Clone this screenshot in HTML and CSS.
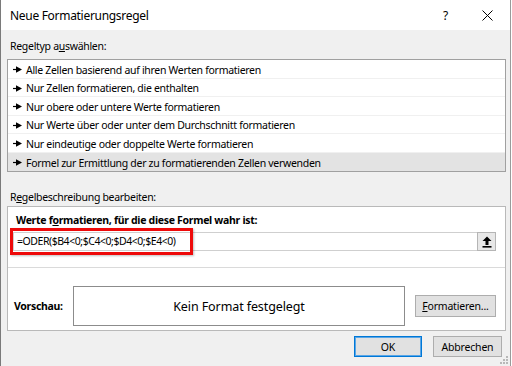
FILE: index.html
```html
<!DOCTYPE html>
<html lang="de">
<head>
<meta charset="utf-8">
<title>Neue Formatierungsregel</title>
<link rel="stylesheet" href="styles.css">
</head>
<body>
<div class="window">
  <div class="titlebar">
    <span class="title">Neue Formatierungsregel</span>
    <span class="cap help">?</span>
    <span class="cap close"><svg width="11" height="11" viewBox="0 0 11 11"><path d="M0.5 0.5 L10.5 10.5 M10.5 0.5 L0.5 10.5" stroke="#000" stroke-width="1" fill="none"/></svg></span>
  </div>
  <div class="content">
    <div class="label l1">Regeltyp a<u>u</u>swählen:</div>
    <ul class="list">
      <li><svg class="arr" width="9" height="7" viewBox="0 0 9 7"><path d="M0 3.5 H4" stroke="#000" stroke-width="1.2"/><polygon points="3,0.3 9,3.5 3,6.7" fill="#000"/></svg>Alle Zellen basierend auf ihren Werten formatieren</li>
      <li><svg class="arr" width="9" height="7" viewBox="0 0 9 7"><path d="M0 3.5 H4" stroke="#000" stroke-width="1.2"/><polygon points="3,0.3 9,3.5 3,6.7" fill="#000"/></svg>Nur Zellen formatieren, die enthalten</li>
      <li><svg class="arr" width="9" height="7" viewBox="0 0 9 7"><path d="M0 3.5 H4" stroke="#000" stroke-width="1.2"/><polygon points="3,0.3 9,3.5 3,6.7" fill="#000"/></svg>Nur obere oder untere Werte formatieren</li>
      <li><svg class="arr" width="9" height="7" viewBox="0 0 9 7"><path d="M0 3.5 H4" stroke="#000" stroke-width="1.2"/><polygon points="3,0.3 9,3.5 3,6.7" fill="#000"/></svg>Nur Werte über oder unter dem Durchschnitt formatieren</li>
      <li><svg class="arr" width="9" height="7" viewBox="0 0 9 7"><path d="M0 3.5 H4" stroke="#000" stroke-width="1.2"/><polygon points="3,0.3 9,3.5 3,6.7" fill="#000"/></svg>Nur eindeutige oder doppelte Werte formatieren</li>
      <li class="sel"><svg class="arr" width="9" height="7" viewBox="0 0 9 7"><path d="M0 3.5 H4" stroke="#000" stroke-width="1.2"/><polygon points="3,0.3 9,3.5 3,6.7" fill="#000"/></svg>Formel zur Ermittlung der zu formatierenden Zellen verwenden</li>
    </ul>
    <div class="label l2">R<u>e</u>gelbeschreibung bearbeiten:</div>
    <div class="desc">
      <div class="desc-top">
        <div class="bold-label">Werte f<u>o</u>rmatieren, für die diese Formel wahr ist:</div>
        <div class="formula-row">
          <div class="field">=ODER($B4&lt;0;$C4&lt;0;$D4&lt;0;$E4&lt;0)</div>
          <div class="pick"><svg width="10" height="12" viewBox="0 0 10 12"><polygon points="5,0.5 9.5,5 6.5,5 6.5,9 3.5,9 3.5,5 0.5,5" fill="#000"/><rect x="0.5" y="10" width="9" height="1.6" fill="#000"/></svg></div>
          <div class="highlight"></div>
        </div>
      </div>
      <div class="preview-row">
        <span class="vlabel">Vorschau:</span>
        <div class="preview">Kein Format festgelegt</div>
        <button class="btn fmt"><u>F</u>ormatieren...</button>
      </div>
    </div>
    <div class="buttons">
      <button class="btn ok">OK</button>
      <button class="btn cancel">Abbrechen</button>
    </div>
  </div>
  <svg class="grip" width="8" height="8" viewBox="0 0 8 8"><g fill="#b8b8b8"><rect x="6" y="0" width="2" height="2"/><rect x="3" y="3" width="2" height="2"/><rect x="6" y="3" width="2" height="2"/><rect x="0" y="6" width="2" height="2"/><rect x="3" y="6" width="2" height="2"/><rect x="6" y="6" width="2" height="2"/></g></svg>
</div>
</body>
</html>
```

FILE: styles.css
```css
html, body {
  margin: 0;
  padding: 0;
  background: #ffffff;
}
body {
  font-family: "Noto Sans", "Open Sans", sans-serif;
  font-size: 10.5px;
  letter-spacing: -0.3px;
  color: #000;
  width: 512px;
  height: 366px;
  overflow: hidden;
}
.window {
  position: relative;
  box-sizing: border-box;
  width: 511px;
  height: 366px;
  background: #f0f0f0;
  border-left: 1px solid #7a7a7a;
  border-right: 1px solid #9a9a9a;
}
.titlebar {
  height: 30px;
  background: #ffffff;
  display: flex;
  align-items: center;
}
.title {
  flex: 1;
  padding-left: 9px;
  font-size: 12px;
  letter-spacing: -0.3px;
  color: #000;
}
.cap {
  display: flex;
  align-items: center;
  justify-content: center;
  height: 30px;
}
.help {
  width: 39px;
  font-size: 12px;
  letter-spacing: 0;
}
.close {
  width: 45px;
}
.content {
  padding: 0 4px 0 6px;
}
.label {
  line-height: 14px;
  height: 14px;
  padding-left: 3px;
}
.l1 {
  margin-top: 9px;
  margin-bottom: 6px;
}
.list {
  list-style: none;
  margin: 0;
  padding: 0;
  background: #ffffff;
  border: 1px solid #a0a0a0;
}
.list li {
  box-sizing: border-box;
  height: 18.5px;
  display: flex;
  align-items: center;
  padding-left: 5px;
  padding-top: 2px;
  border-bottom: 1px solid #f0f0f0;
  white-space: nowrap;
}
.list li:last-child {
  border-bottom: none;
}
.list li.sel {
  background: #e3e3e3;
}
.arr {
  margin-right: 4px;
  flex: none;
}
.l2 {
  margin-top: 18px;
  margin-bottom: 2px;
}
.desc {
  background: #ffffff;
  border: 1px solid #b9b9b9;
}
.desc-top {
  padding: 6px 9px 16px 5px;
  border-bottom: 1px solid #dadada;
}
.bold-label {
  font-weight: bold;
  line-height: 14px;
  height: 14px;
  padding-left: 3px;
}
.formula-row {
  position: relative;
  margin-top: 5px;
  display: flex;
  height: 19px;
}
.field {
  flex: 1;
  box-sizing: border-box;
  border: 1px solid #cfcfcf;
  border-right: none;
  padding-left: 3px;
  line-height: 17px;
  white-space: nowrap;
  letter-spacing: -0.45px;
}
.pick {
  box-sizing: border-box;
  width: 19px;
  height: 19px;
  background: #e8e8e8;
  border: 1px solid #b5b5b5;
  display: flex;
  align-items: center;
  justify-content: center;
}
.highlight {
  position: absolute;
  left: -3px;
  top: -4px;
  width: 183px;
  height: 27px;
  box-sizing: border-box;
  border: 3px solid #ee0a0a;
  box-shadow: 1px 1px 2px rgba(0, 0, 0, 0.25);
}
.preview-row {
  display: flex;
  align-items: center;
  padding: 18px 9px 4px 6px;
}
.vlabel {
  width: 59px;
  font-weight: bold;
}
.preview {
  box-sizing: border-box;
  width: 332px;
  height: 40px;
  border: 1px solid #8c8c8c;
  display: flex;
  align-items: center;
  justify-content: center;
  font-size: 12.5px;
  letter-spacing: -0.1px;
}
.btn {
  box-sizing: border-box;
  font-family: "Noto Sans", "Open Sans", sans-serif;
  font-size: 10.5px;
  letter-spacing: -0.2px;
  color: #000;
  background: #e1e1e1;
  border: 1px solid #adadad;
  padding: 0;
  margin: 0;
}
.fmt {
  margin-left: 10px;
  width: 81px;
  height: 22px;
}
.buttons {
  display: flex;
  justify-content: flex-end;
  gap: 11px;
  margin-top: 5px;
  padding-right: 4px;
}
.ok, .cancel {
  width: 68px;
  height: 21px;
}
.ok {
  border: 1px solid #0078d7;
  box-shadow: inset 0 0 0 1px #5aa6e6;
}
.cancel {
  width: 69px;
}
.grip {
  position: absolute;
  right: 2px;
  bottom: 2px;
}
```
